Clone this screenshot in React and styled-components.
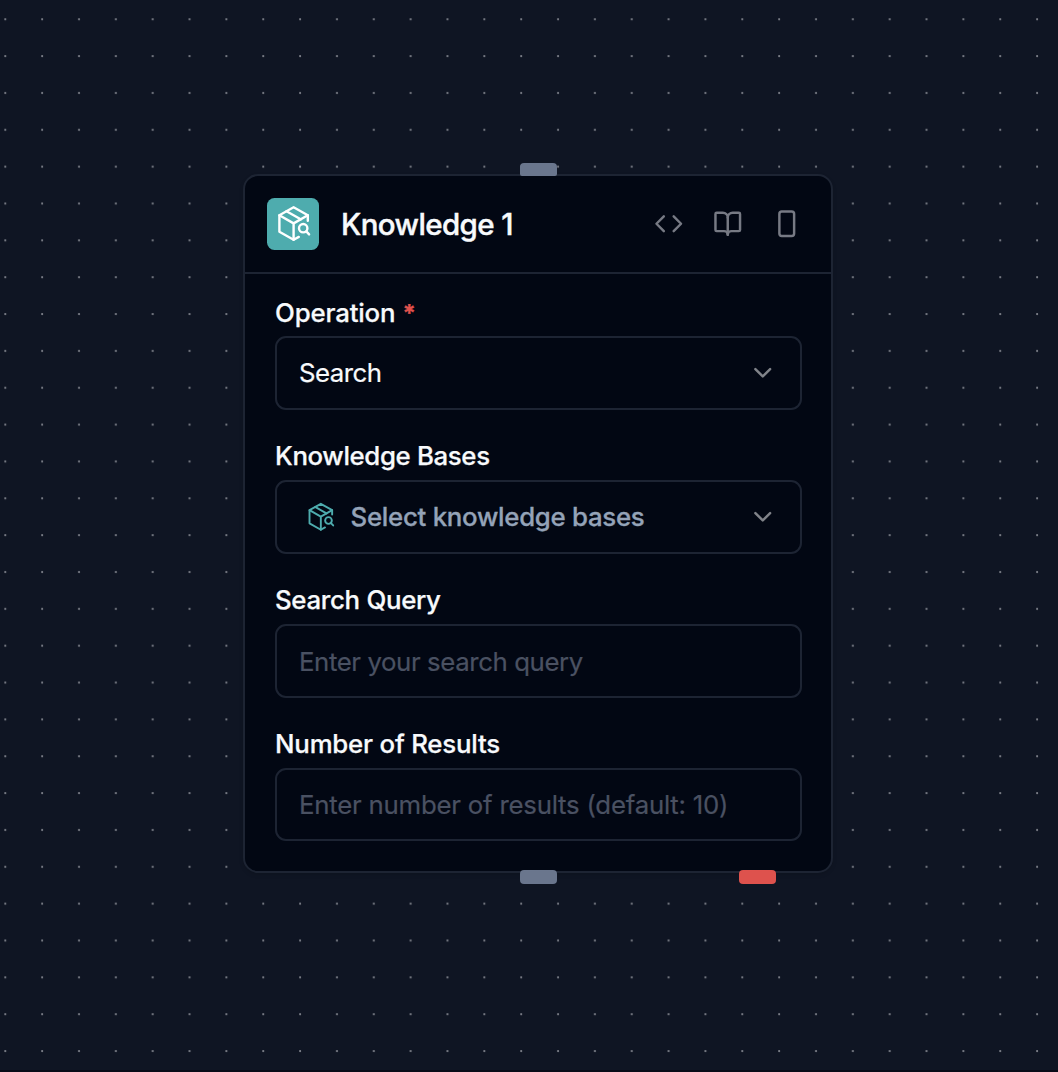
import React from "react";
import styled, { createGlobalStyle } from "styled-components";
import { Code, BookOpen, RectangleVertical, ChevronDown } from "lucide-react";

const GlobalStyle = createGlobalStyle`
  *, *::before, *::after { box-sizing: border-box; }
  body {
    margin: 0;
    background: #0f1523;
    font-family: Inter, "Liberation Sans", sans-serif;
    color: #f8fafc;
  }
`;

const Canvas = styled.main`
  position: relative;
  width: 100%;
  height: 1072px;
  padding-top: 174px;
  padding-left: 243px;
  overflow: hidden;
  border-bottom: 2px solid #080b18;
`;

const Dots = styled.svg`
  position: absolute;
  inset: 0;
  width: 100%;
  height: 100%;
`;

const Card = styled.section`
  position: relative;
  width: 590px;
  height: 698.5px;
  border: 2px solid #1d2433;
  border-radius: 15px;
  background: #020713;
  box-shadow: 0 2px 4px rgba(0, 0, 0, 0.12);
`;

const Header = styled.header`
  display: flex;
  align-items: center;
  height: 97.5px;
  padding: 0 30px 0 22px;
  border-bottom: 2px solid #1d2433;
`;

const IconTile = styled.div`
  display: grid;
  place-items: center;
  width: 52px;
  height: 52px;
  border-radius: 7.5px;
  background: #4eacae;
  color: #fff;
`;

const Title = styled.h1`
  margin: 0 auto 0 22px;
  font-size: 29.5px;
  line-height: 44px;
  font-weight: 500;
  -webkit-text-stroke: 0.4px currentColor;
  letter-spacing: -0.6px;
  color: #f8fafc;
`;

const Actions = styled.div`
  display: flex;
  align-items: center;
  gap: 29.5px;
  color: #777a84;
`;

const Body = styled.div`
  display: flex;
  flex-direction: column;
  gap: 30px;
  padding: 22.5px 29px 22.5px 30px;
`;

const Field = styled.div`
  display: flex;
  flex-direction: column;
`;

const Label = styled.label`
  height: 40px;
  font-size: 25.8px;
  line-height: ${(p) => p.$line || 32}px;
  font-weight: 500;
  -webkit-text-stroke: 0.25px currentColor;
  letter-spacing: ${(p) => p.$spacing || 0}px;
`;

const Required = styled.span`
  margin-left: 7px;
  font-size: 24px;
  font-weight: 700;
  color: #e0524d;
`;

const Control = styled.div`
  display: flex;
  align-items: center;
  height: ${(p) => p.$height || 74}px;
  padding: 0 23px 0 22px;
  border: 2px solid #1d2433;
  border-radius: 11px;
  font-size: 25.8px;
  -webkit-text-stroke: 0.2px currentColor;
  color: ${(p) => (p.$muted ? "#4a5162" : "#f8fafc")};
`;

const Value = styled.span`
  flex: 1;
  padding-bottom: ${(p) => p.$lift ?? 2}px;
  white-space: nowrap;
  letter-spacing: ${(p) => p.$spacing || 0}px;
`;

const Selection = styled(Value)`
  margin-left: 15.5px;
  font-weight: 500;
  -webkit-text-stroke: 0.3px currentColor;
  color: #94a3b8;
`;

const Chevron = styled(ChevronDown)`
  color: #808389;
`;

const BaseIcon = styled.span`
  display: flex;
  margin-left: 6.5px;
  color: #4eacae;
`;

const Handle = styled.div`
  position: absolute;
  top: ${(p) => p.$top}px;
  left: ${(p) => p.$left}px;
  width: 37px;
  height: ${(p) => (p.$upper ? 13 : 13.5)}px;
  border-radius: ${(p) => (p.$upper ? "4px 4px 2px 2px" : "4px")};
  background: ${(p) => p.$color || "#6a768d"};
`;

function PackageSearch({ size }) {
  return (
    <svg width={size} height={size} viewBox="0 0 37 37" fill="none" stroke="currentColor"
      strokeWidth="2.4" strokeLinecap="round" strokeLinejoin="round">
      <path d="M32.8 15.8V10.2L18.6 2.3L4.4 10.2V26.8L18.6 34.8L23.8 31.9" />
      <path d="M4.4 10.2L18.6 18.4L32.8 10.2M18.6 34.8V18.4" />
      <path d="M11.5 6.2L25.7 14.3" />
      <circle cx="28.2" cy="23.2" r="4.2" />
      <path d="M31.3 26.4L34.1 29.4" />
    </svg>
  );
}

export default function App() {
  return (
    <>
      <GlobalStyle />
      <Canvas>
        <Dots>
          <defs>
            <pattern id="dots" x="4.2" y="18.2" width="36.85" height="36.85" patternUnits="userSpaceOnUse">
              <circle cx="1.1" cy="1.1" r="1.05" fill="#858891" />
            </pattern>
          </defs>
          <rect width="100%" height="100%" fill="url(#dots)" />
        </Dots>
        <Card>
          <Header>
            <IconTile><PackageSearch size={37} /></IconTile>
            <Title>Knowledge 1</Title>
            <Actions>
              <Code size={29.5} />
              <BookOpen size={29.5} />
              <RectangleVertical size={29.5} />
            </Actions>
          </Header>
          <Body>
            <Field>
              <Label $line={34} $spacing={-0.15}>Operation<Required>*</Required></Label>
              <Control><Value $spacing={-0.5}>Search</Value><Chevron size={29.5} /></Control>
            </Field>
            <Field>
              <Label $spacing={-0.35}>Knowledge Bases</Label>
              <Control>
                <BaseIcon><PackageSearch size={29.5} /></BaseIcon>
                <Selection $spacing={-0.27}>Select knowledge bases</Selection>
                <Chevron size={29.5} />
              </Control>
            </Field>
            <Field>
              <Label $spacing={-0.3}>Search Query</Label>
              <Control $muted><Value $lift={0} $spacing={-0.41}>Enter your search query</Value></Control>
            </Field>
            <Field>
              <Label $spacing={-0.2}>Number of Results</Label>
              <Control $muted $height={73}><Value $lift={0} $spacing={-0.23}>Enter number of results (default: 10)</Value></Control>
            </Field>
          </Body>
          <Handle $upper $top={-13} $left={275} />
          <Handle $top={694} $left={275} />
          <Handle $top={694} $left={494} $color="#de524d" />
        </Card>
      </Canvas>
    </>
  );
}
